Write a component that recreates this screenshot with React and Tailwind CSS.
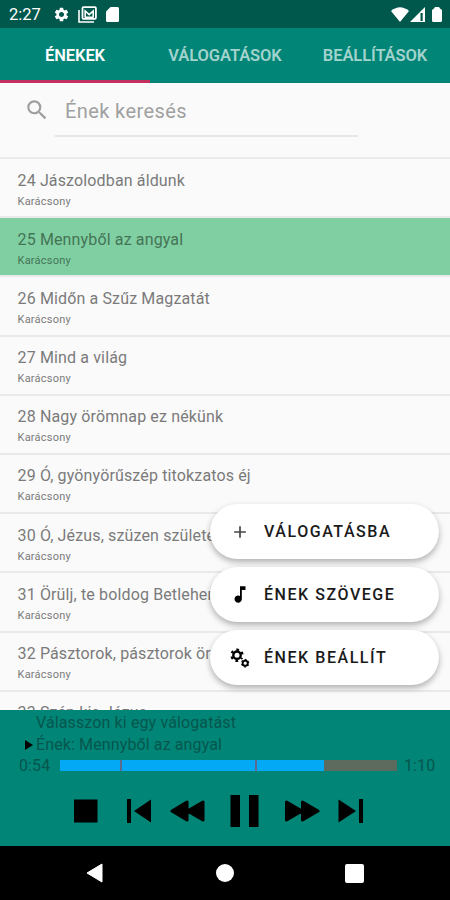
import React, { useState } from 'react';
import { MdSettings, MdSearch, MdAdd, MdMusicNote } from 'react-icons/md';

const tabs = ['ÉNEKEK', 'VÁLOGATÁSOK', 'BEÁLLÍTÁSOK'];

const songs = [
    { id: 24, title: 'Jászolodban áldunk', group: 'Karácsony' },
    { id: 25, title: 'Mennyből az angyal', group: 'Karácsony' },
    { id: 26, title: 'Midőn a Szűz Magzatát', group: 'Karácsony' },
    { id: 27, title: 'Mind a világ', group: 'Karácsony' },
    { id: 28, title: 'Nagy örömnap ez nékünk', group: 'Karácsony' },
    { id: 29, title: 'Ó, gyönyörűszép titokzatos éj', group: 'Karácsony' },
    { id: 30, title: 'Ó, Jézus, szüzen született', group: 'Karácsony' },
    { id: 31, title: 'Örülj, te boldog Betlehem', group: 'Karácsony' },
    { id: 32, title: 'Pásztorok, pásztorok örülve', group: 'Karácsony' },
    { id: 33, title: 'Szép kis Jézus' },
];

const GearsIcon = () => (
    <svg width="20" height="20" viewBox="0 0 20 20" fill="none" stroke="#000">
        <circle cx="7" cy="7.2" r="3.7" strokeWidth="2.4" />
        <circle cx="7" cy="7.2" r="5.6" strokeWidth="2.2" strokeDasharray="2.6 3.264" strokeDashoffset="1.3" transform="rotate(30 7 7.2)" />
        <circle cx="15.2" cy="15.2" r="2.600" strokeWidth="1.9" />
        <circle cx="15.2" cy="15.2" r="3.700" strokeWidth="1" strokeDasharray="1.8 2.075" strokeDashoffset="0.9" transform="rotate(30 15.2 15.2)" />
    </svg>
);

const StatusBar = () => (
    <div className="h-7 shrink-0 bg-[#00574b] flex items-center text-white pl-[9px] pr-[8px]">
        <span className="text-[16.5px] leading-7 w-[44px] pt-px">2:27</span>
        <MdSettings size={17} />
        <svg className="ml-[8px]" width="19" height="17" viewBox="0 0 19 17" fill="none" stroke="#fff">
            <path d="M1 4v12h15" strokeWidth="1.600" />
            <rect x="4.500" y="1.200" width="13.400" height="11.600" rx="1" strokeWidth="1.800" />
            <path d="M7.200 11.500V5l4 3.600L15.200 5v6.500" strokeWidth="1.600" />
            <path d="M7 11.500h8.500" strokeWidth="2" />
        </svg>
        <svg className="ml-[9px]" width="13" height="15" viewBox="0 0 13 15" fill="#fff">
            <path d="M4.500 0H11.500Q13 0 13 1.500V13.500Q13 15 11.500 15H1.500Q0 15 0 13.500V4.500Z" />
        </svg>
        <div className="ml-auto flex items-center">
            <svg width="18" height="15" viewBox="0 0 18 15" fill="#fff">
                <path d="M0 4Q9 -3.500 18 4L9 15Z" />
            </svg>
            <svg className="ml-px" width="15" height="15" viewBox="0 0 15 15" fill="#fff">
                <path d="M0 15L15 0V15Z" />
                <rect x="10.500" y="6" width="2.200" height="8" fill="#00574b" />
            </svg>
            <svg className="ml-[7px]" width="10" height="15" viewBox="0 0 10 15" fill="#fff">
                <path d="M3 0H7L8 1.500L10 3V13.500Q10 15 8.500 15H1.500Q0 15 0 13.500V3L2 1.500Z" />
            </svg>
        </div>
    </div>
);

const Tabs = ({ active, onSelect }) => (
    <div className="h-[55px] shrink-0 bg-[#008577] flex">
        {tabs.map((tab, i) => (
            <button
                key={tab}
                onClick={() => onSelect(i)}
                className={`flex-1 basis-0 pt-[4px] text-[16.5px] font-semibold tracking-[-0.1px] whitespace-nowrap border-b-[3px] ${
                    active === i ? 'text-white border-[#c2305f]' : 'text-[#a3d3cd] border-transparent'
                }`}
            >
                {tab}
            </button>
        ))}
    </div>
);

const SearchBar = () => (
    <div className="h-[76px] shrink-0 flex pl-[24px] border-b-2 border-[#ebebeb]">
        <MdSearch size={26} color="#9e9e9e" className="mt-[14px]" />
        <div className="ml-[5px] w-[303px] h-[54px] pl-[10px] border-b-2 border-[#e6e6e6]">
            <input
                type="text"
                placeholder="Ének keresés"
                className="w-full h-[54px] pt-px text-[20px] tracking-[0.4px] outline-none placeholder:text-[#a0a0a0]"
            />
        </div>
    </div>
);

const SongRow = ({ song, selected }) => (
    <div className={`h-[59.2px] shrink-0 pl-[17.5px] pt-[10.5px] border-b-2 border-[#e9e9e9] ${selected ? 'bg-[#80cfa2] text-[#447456]' : 'text-[#7a7a7a]'}`}>
        <div className="text-[16px] leading-[22px] tracking-[0.14px] whitespace-nowrap">{song.id} {song.title}</div>
        {song.group && <div className="text-[11px] leading-[14px] mt-[3px] tracking-[0.24px]">{song.group}</div>}
    </div>
);

const ActionButton = ({ icon, label }) => (
    <button className="w-[229px] h-[55px] rounded-full bg-white flex items-center pl-[19px] shadow-[0_3px_6px_rgba(0,0,0,0.3)]">
        <span className="w-[22px] flex justify-center">{icon}</span>
        <span className="ml-[13px] pt-px text-[16px] font-medium tracking-[1.55px] text-[#1a1a1a]">{label}</span>
    </button>
);

const Player = () => (
    <div className="h-[136px] shrink-0 bg-[#008577] text-[#07564d] text-[16px] tracking-[0.12px]">
        <div className="pl-[36px] leading-[22px] pt-[2px]">Válasszon ki egy válogatást</div>
        <div className="flex items-center pl-[25px] leading-[22px]">
            <svg className="mr-[3px] mb-px" width="8" height="10" viewBox="0 0 8 10">
                <path d="M0 0L8 5L0 10Z" />
            </svg>
            Ének: Mennyből az angyal
        </div>
        <div className="flex items-center h-[19px] pl-[19px]">
            <span className="w-[41px] pt-px">0:54</span>
            <div className="w-[337px] h-[11px] bg-[#5c6b5d] flex">
                <div className="w-[60px] bg-[#03a9f4]" />
                <div className="w-[2px] bg-[#5c6b8d]" />
                <div className="w-[133px] bg-[#03a9f4]" />
                <div className="w-[2px] bg-[#5c6b8d]" />
                <div className="w-[67px] bg-[#03a9f4]" />
            </div>
            <span className="ml-[7px] pt-px">1:10</span>
        </div>
        <div className="flex items-center h-[71px] pl-[74px]">
            <svg width="24" height="24" viewBox="0 0 24 24"><rect y="0.500" width="23.500" height="23" /></svg>
            <svg className="ml-[28px]" width="26" height="26" viewBox="0 0 26 26">
                <path d="M1 1h4v24H1zM25 1.500v23L8 13z" />
            </svg>
            <svg className="ml-[18px]" width="35" height="22" viewBox="0 0 35 22">
                <path d="M17 2v18L2 11zM33 2v18L17.500 11z" stroke="#000" strokeWidth="3" strokeLinejoin="round" />
            </svg>
            <svg className="ml-[25px]" width="29" height="32" viewBox="0 0 29 32">
                <path d="M0.500 0h9.500v32H0.500zM19 0h9.500v32H19z" />
            </svg>
            <svg className="ml-[26px]" width="35" height="22" viewBox="0 0 35 22">
                <path d="M1.500 2v18L17 11zM17.500 2v18L33 11z" stroke="#000" strokeWidth="3" strokeLinejoin="round" />
            </svg>
            <svg className="ml-[18px]" width="26" height="26" viewBox="0 0 26 26">
                <path d="M0.500 1.500v23L18 13zM21 1h4v24h-4z" />
            </svg>
        </div>
    </div>
);

const NavBar = () => (
    <div className="h-[54px] shrink-0 bg-black flex items-center pl-[86px]">
        <svg width="18" height="20" viewBox="0 0 18 20" fill="#fff">
            <path d="M16 1V19L1 10Z" stroke="#fff" strokeLinejoin="round" />
        </svg>
        <div className="ml-[112px] size-[18px] rounded-full bg-white" />
        <div className="ml-[111px] size-[19px] rounded-[2px] bg-white" />
    </div>
);

const App = () => {
    const [active, setActive] = useState(0);

    return (
        <div className="relative w-[450px] h-[900px] overflow-hidden flex flex-col bg-[#fafafa] font-[Roboto,sans-serif]">
            <StatusBar />
            <Tabs active={active} onSelect={setActive} />
            <SearchBar />
            <div className="flex-1 min-h-0 overflow-hidden flex flex-col">
                {songs.map(song => (
                    <SongRow key={song.id} song={song} selected={song.id === 25} />
                ))}
            </div>
            <Player />
            <NavBar />
            <div className="absolute left-[210px] top-[504px] flex flex-col gap-2">
                <ActionButton icon={<MdAdd size={20} color="#444" />} label="VÁLOGATÁSBA" />
                <ActionButton icon={<MdMusicNote size={23} />} label="ÉNEK SZÖVEGE" />
                <ActionButton icon={<GearsIcon />} label="ÉNEK BEÁLLÍT" />
            </div>
        </div>
    );
};

export default App;
